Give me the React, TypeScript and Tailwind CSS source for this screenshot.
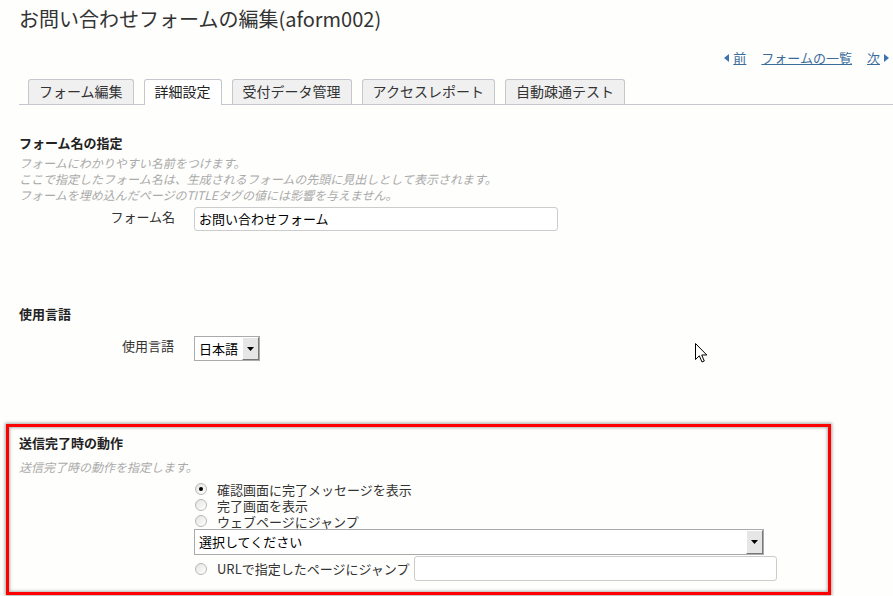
import React from 'react';

const tabs = ['フォーム編集', '詳細設定', '受付データ管理', 'アクセスレポート', '自動疎通テスト'];
const activeTab = '詳細設定';

const Radio: React.FC<{ checked?: boolean }> = ({ checked }) => (
  <span className="relative inline-block w-[12px] h-[12px] rounded-full border border-[#b8b8b8] bg-gradient-to-br from-[#e4e4e4] to-white shrink-0">
    {checked && <span className="absolute left-[3px] top-[3px] w-[4px] h-[4px] rounded-full bg-black" />}
  </span>
);

const DropButton: React.FC<{ className?: string }> = ({ className }) => (
  <span
    className={`flex items-center justify-center w-[17px] bg-[#e6e6e6] border-l border-t border-white border-r border-b border-r-[#777] border-b-[#777] ${className ?? ''}`}
  >
    <svg width="7" height="4" viewBox="0 0 7 4">
      <path d="M0 0h7L3.5 4z" fill="#000" />
    </svg>
  </span>
);

const App: React.FC = () => {
  return (
    <div className="relative w-[893px] h-[596px] overflow-hidden bg-[#fefefc] text-[#333] text-[13px] font-['Noto_Sans_CJK_JP','Liberation_Sans',sans-serif]">
      <div className="pl-[19px]">
        {/* title */}
        <h1 className="h-[38px] leading-[38px] text-[20px] font-normal text-[#333]">お問い合わせフォームの編集(aform002)</h1>

        {/* prev / list / next */}
        <div className="mt-[10px] h-[20px] leading-[20px] flex justify-end items-center gap-[15px] pr-[4px] text-[13px] text-[#3a6c9c]">
          <span className="flex items-center gap-[4px]">
            <svg width="5" height="8" viewBox="0 0 5 8"><path d="M5 0v8L0 4z" fill="#3a73b0" /></svg>
            <a className="underline">前</a>
          </span>
          <a className="underline">フォームの一覧</a>
          <span className="flex items-center gap-[4px]">
            <a className="underline">次</a>
            <svg width="5" height="8" viewBox="0 0 5 8"><path d="M0 0v8L5 4z" fill="#3a73b0" /></svg>
          </span>
        </div>

        {/* tabs */}
        <div className="mt-[11px] flex items-end gap-[10px] pl-[9px] border-b border-[#c4c8cc] h-[26px]">
          {tabs.map((t) => (
            <div
              key={t}
              className={`h-[25px] leading-[23px] px-[10px] border border-b-0 border-[#c4c8cc] rounded-t-[3px] text-[14px] ${
                t === activeTab ? 'bg-white text-[#222] h-[26px] -mb-px' : 'bg-[#f0f0f0] text-[#333]'
              }`}
            >
              {t}
            </div>
          ))}
        </div>

        {/* form name */}
        <div className="mt-[28px] h-[20px] leading-[20px] font-bold text-[#222]">フォーム名の指定</div>
        <div className="mt-[2px] text-[12px] leading-[16px] italic text-[#aaa]">
          <div>フォームにわかりやすい名前をつけます。</div>
          <div>ここで指定したフォーム名は、生成されるフォームの先頭に見出しとして表示されます。</div>
          <div>フォームを埋め込んだページのTITLEタグの値には影響を与えません。</div>
        </div>
        <div className="mt-[4px] flex items-start">
          <div className="w-[156px] text-right leading-[20px] text-[#333]">フォーム名</div>
          <div className="ml-[19px] w-[364px] h-[24px] border border-[#ccc] rounded-[3px] bg-white px-[4px] leading-[22px] text-black">
            お問い合わせフォーム
          </div>
        </div>

        {/* language */}
        <div className="mt-[73px] h-[20px] leading-[20px] font-bold text-[#222]">使用言語</div>
        <div className="mt-[12px] flex items-start">
          <div className="w-[155px] text-right leading-[20px] text-[#333]">使用言語</div>
          <div className="ml-[20px] flex h-[25px] w-[66px] border border-[#aaa] bg-white">
            <span className="flex-1 pl-[4px] leading-[23px] text-black text-[13px]">日本語</span>
            <DropButton />
          </div>
        </div>
      </div>

      {/* completion behaviour (highlighted) */}
      <div className="ml-[6px] mt-[63px] w-[825px] border-[3px] border-[#ff0000] pl-[10px] pb-[11px] shadow-[0_0_3px_1px_rgba(0,0,0,0.35),inset_0_0_3px_1px_rgba(0,0,0,0.3)]">
        <div className="mt-[6px] h-[20px] leading-[20px] font-bold text-[#222]">送信完了時の動作</div>
        <div className="mt-[6px] text-[12px] leading-[16px] italic text-[#aaa]">送信完了時の動作を指定します。</div>
        <div className="mt-[6px] ml-[175px]">
          {['確認画面に完了メッセージを表示', '完了画面を表示', 'ウェブページにジャンプ'].map((l, i) => (
            <label key={l} className="flex items-center h-[16px] gap-[10px] pl-[1px] text-[#333]">
              <Radio checked={i === 0} />
              <span className="leading-[15px]">{l}</span>
            </label>
          ))}
          <div className="flex h-[26px] w-[570px] border border-[#aaa] bg-white">
            <span className="flex-1 pl-[4px] leading-[24px] text-black">選択してください</span>
            <DropButton />
          </div>
          <div className="mt-[1px] flex items-center h-[25px]">
            <label className="flex items-center gap-[10px] pl-[1px]">
              <Radio />
              <span className="text-[#333]">URLで指定したページにジャンプ</span>
            </label>
            <div className="ml-[5px] w-[363px] h-[25px] border border-[#ccc] rounded-[3px] bg-white" />
          </div>
        </div>
      </div>

      {/* mouse pointer */}
      <svg className="absolute left-[695px] top-[343px]" width="13" height="20" viewBox="0 0 13 20">
        <path d="M0.5 0.5V16.5L4.3 12.8L7 19L9.3 18L6.7 12H11.8Z" fill="#fff" stroke="#000" strokeWidth="1" strokeLinejoin="round" />
      </svg>
    </div>
  );
};

export default App;
